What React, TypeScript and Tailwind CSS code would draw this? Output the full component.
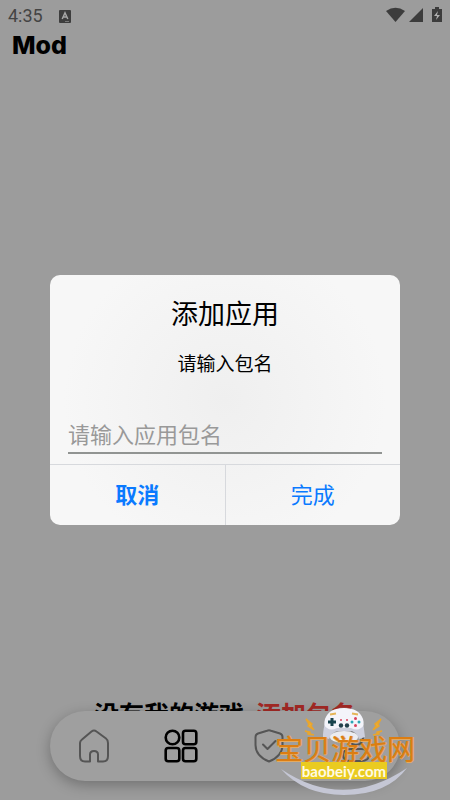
import React from "react";

function StatusBar() {
  return (
    <div className="flex h-8 items-center justify-between pr-1 pl-2 text-[#444444]">
      <div className="flex items-center gap-4">
        <span className="font-[Roboto,sans-serif] text-[18px] leading-8">4:35</span>
        <svg className="h-[13px] w-3" viewBox="0 0 12 13" aria-hidden="true">
          <rect width="12" height="13" rx="1" fill="#3d3d3d" />
          <path d="M3.2 9 6 2.8 8.8 9M4.3 7h3.4" fill="none" stroke="#a6a6a6" strokeWidth="1.5" />
          <path d="M6 11.5h4" stroke="#777777" />
        </svg>
      </div>
      <svg className="h-[18px] w-[60px]" viewBox="0 0 60 18" fill="#3c3c3c" aria-hidden="true">
        <path d="M0 4Q9.500-2.500 19 4L9.500 15Z" />
        <path d="M37 1v14H23Z" />
        <path d="M49 0h4v2h3v13H46V2h3Z" />
        <path d="m52 4-4 5h3l-1 4 4-5h-3Z" fill="#b0b0b0" />
      </svg>
    </div>
  );
}

function BottomNav() {
  const item = "flex h-full flex-1 items-center justify-center";
  return (
    <nav className="relative mx-[50px] flex h-[70px] items-center rounded-full bg-[#9f9f9f] shadow-[0_4px_14px_rgba(0,0,0,0.28)]">
      <button className={item} aria-label="Home">
        <svg className="h-[34px] w-8" viewBox="0 0 32 34" fill="none" stroke="#555555" strokeWidth="2" strokeLinejoin="round">
          <path d="M4 10.500 13.500 2.500Q16 .500 18.500 2.500L28 9.500Q30 11 30 14V27Q30 32.500 25 32.500H20V25.500Q20 22 16 22Q12 22 12 25.500V32.500H7Q2 32.500 2 27V14Q2 12 4 10.500Z" />
        </svg>
      </button>
      <button className={item} aria-label="Apps">
        <svg className="h-[34px] w-[34px]" viewBox="0 0 34 34" fill="none" stroke="#000000" strokeWidth="2.6">
          <circle cx="8.500" cy="8.500" r="6.800" />
          <rect x="19" y="1.700" width="13.300" height="13.600" rx="2.500" />
          <rect x="1.700" y="19" width="13.600" height="13.300" rx="2.500" />
          <rect x="19" y="19" width="13.300" height="13.300" rx="2.500" />
        </svg>
      </button>
      <button className={item} aria-label="Security">
        <svg className="h-[34px] w-[30px]" viewBox="0 0 30 34" fill="none" stroke="#555555" strokeWidth="2" strokeLinejoin="round" strokeLinecap="round">
          <path d="M13 1.700Q15 1 17 1.700L26 4.500Q28.500 5.500 28.500 8V16Q28.500 27 15 32.500Q1.500 27 1.500 16V8Q1.500 5.500 4 4.500Z" />
          <path d="m9 15.500 4.500 4.500 8-8" />
        </svg>
      </button>
      <button className={item} aria-label="Profile">
        <svg className="h-[34px] w-8" viewBox="0 0 32 34" fill="none" stroke="#555555" strokeWidth="2">
          <circle cx="16" cy="9" r="7" />
          <path d="M11 20H21Q29 20 29 26T21 32H11Q3 32 3 26T11 20Z" />
        </svg>
      </button>
    </nav>
  );
}

function SiteBadge() {
  return (
    <div className="pointer-events-none absolute right-[35px] bottom-1 flex h-[90px] w-[140px] flex-col items-center">
      <svg className="absolute inset-0 h-full w-full" viewBox="0 0 140 90" aria-hidden="true">
        <path d="M6 63Q68 105 132 62Q112 89 69 89Q29 89 6 63Z" fill="#c5c7d5" />
        <path d="M51 11C50 18 48 23 48 31L54 33Q57 26 62 25H76Q82 26 84 33L90 31Q89 22 87 11Z" fill="#cdcfdd" />
        <path d="M50 13Q54 2 69 2T88 13Q90 20 86 22Q82 25 76 22H62Q56 25 52 22Q48 20 50 13Z" fill="#f4f4fa" />
        <ellipse cx="69" cy="31" rx="14" ry="6" fill="#ececf0" />
        <path d="M55 8.500 61 7.500M77 7.500 83 8.500" stroke="#e5b557" strokeWidth="2" />
        <path d="M57 12v8M53 16h8" stroke="#18434d" strokeWidth="3" />
        <g fill="#23414c"><circle cx="66" cy="19.500" r="2.200" /><circle cx="72" cy="19.500" r="2.200" /></g>
        <g fill="#d8415d"><circle cx="66" cy="14" r="1" /><circle cx="72" cy="14" r="1" /><circle cx="80.500" cy="12.500" r="1.500" /><circle cx="80.500" cy="19.500" r="1.500" /></g>
        <g fill="#2ba6b5"><circle cx="77" cy="16" r="1.500" /><circle cx="84" cy="16" r="1.500" /></g>
        <path d="m31 13 6 5-1 2 3 4-6-4 1-2ZM30 25l5 1 0 2 4 1-6-1 0-2ZM106 13l-6 5 1 2-3 4 6-4-1-2ZM107 25l-5 1 0 2-4 1 6-1 0-2Z" fill="#edae35" stroke="#e8a52e" strokeWidth="1.5" />
      </svg>
      <span className="relative mt-7 text-[28px] leading-7 font-normal whitespace-nowrap text-[#dc7d12] [text-shadow:1px_0_#e2aa62,0_1px_#e2aa62]">
        宝贝游戏网
      </span>
      <span className="relative mr-0.5 flex h-[17px] w-[86px] items-center justify-center bg-[#eacb20] font-[Lato,sans-serif] text-[15px] leading-4 font-bold text-[#fffbe5]">
        baobeiy.com
      </span>
    </div>
  );
}

function AddAppDialog() {
  return (
    <div className="absolute inset-0 flex items-center justify-center px-[50px]">
      <form
        role="dialog"
        aria-labelledby="dialog-title"
        className="w-full max-w-[420px] overflow-hidden rounded-[10px] bg-[radial-gradient(circle_at_center,#efefef,#f7f7f7_75%)] text-black"
        onSubmit={(e) => e.preventDefault()}
      >
        <div className="px-[18px] pt-[18px] pb-[10px]">
          <h2 id="dialog-title" className="text-center text-[27px] leading-10 font-normal">添加应用</h2>
          <label htmlFor="package-name" className="mt-4 block text-center text-[19px] leading-7">请输入包名</label>
          <input
            id="package-name"
            type="text"
            placeholder="请输入应用包名"
            className="mt-[37px] block h-10 w-full border-b-2 border-[#919492] bg-transparent text-[22px] outline-none placeholder:text-[#999999]"
          />
        </div>
        <div className="flex h-[61px] border-t border-[#d7d9dd] text-[22px] text-[#0a7aff]">
          <button type="button" className="flex-1 border-r border-[#d7d9dd] pb-1 font-bold">取消</button>
          <button type="submit" className="flex-1 pb-1">完成</button>
        </div>
      </form>
    </div>
  );
}

export default function App() {
  return (
    <div className="relative flex min-h-screen flex-col bg-[#9c9c9c] font-['Noto_Sans_CJK_SC',sans-serif]">
      <StatusBar />
      <header className="px-3">
        <h1 className="font-[Inter,sans-serif] text-[25px] leading-[26px] font-extrabold">Mod</h1>
      </header>
      <main className="flex flex-1 flex-col justify-end">
        <p className="flex h-4 justify-center gap-3 text-[25px] leading-9 font-bold whitespace-nowrap">
          <span>没有我的游戏</span>
          <a href="#add" className="text-[#a32925]">添加包名</a>
        </p>
      </main>
      <footer className="pb-[19px]">
        <BottomNav />
      </footer>
      <AddAppDialog />
      <SiteBadge />
    </div>
  );
}
